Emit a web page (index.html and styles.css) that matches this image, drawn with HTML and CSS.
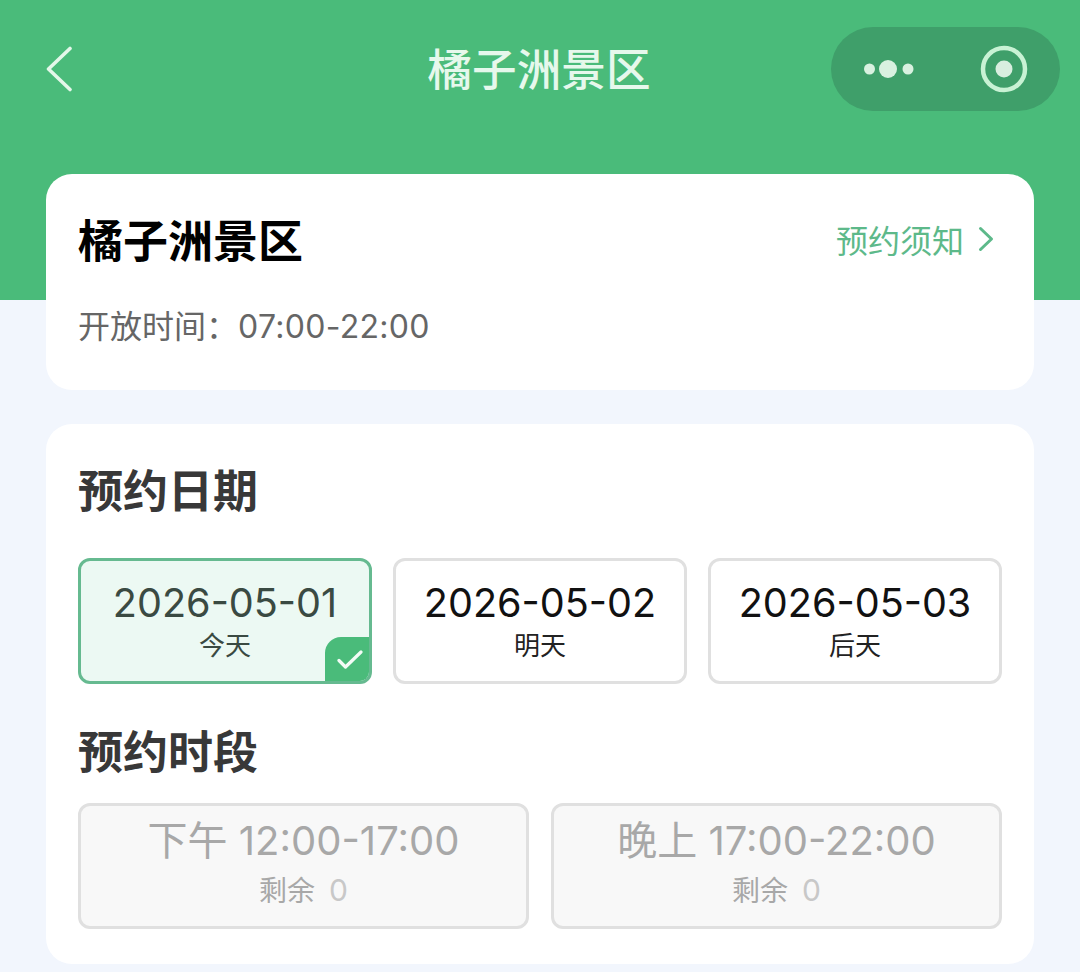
FILE: index.html
```html
<!DOCTYPE html>
<html lang="zh-CN">
<head>
  <meta charset="UTF-8" />
  <meta name="viewport" content="width=device-width, initial-scale=1" />
  <title>橘子洲景区 - 预约</title>
  <link rel="stylesheet" href="styles.css">
</head>
<body>
  <header class="navbar">
    <div class="nav-left">
      <svg class="back" width="28" height="46" viewBox="0 0 28 46" fill="none">
        <path d="M24 2.5 L2.5 23 L24 43.5" stroke="#e3f7e9" stroke-width="3.6" stroke-linecap="round" stroke-linejoin="round"/>
      </svg>
    </div>
    <div class="nav-title">橘子洲景区</div>
    <div class="nav-right">
      <div class="capsule">
        <svg width="52" height="22" viewBox="0 0 52 22">
          <circle cx="5.5" cy="11" r="5.5" fill="#d9f1e0"/>
          <circle cx="24" cy="11" r="9" fill="#d9f1e0"/>
          <circle cx="44" cy="11" r="5.5" fill="#d9f1e0"/>
        </svg>
        <svg width="48" height="48" viewBox="0 0 48 48">
          <circle cx="24" cy="24" r="21" fill="none" stroke="#c8f2d4" stroke-width="4.5"/>
          <circle cx="24" cy="24" r="8.5" fill="#d9eedf"/>
        </svg>
      </div>
    </div>
  </header>

  <main class="content">
    <section class="card info-card">
      <div class="info-head">
        <h1>橘子洲景区</h1>
        <a class="notice">预约须知
          <svg width="16" height="26" viewBox="0 0 16 26" fill="none">
            <path d="M2.5 2.5 L13.5 13 L2.5 23.5" stroke="#5db98a" stroke-width="3" stroke-linecap="round" stroke-linejoin="round"/>
          </svg>
        </a>
      </div>
      <p class="open-time">开放时间：<span class="hours">07:00-22:00</span></p>
    </section>

    <section class="card booking-card">
      <h2>预约日期</h2>
      <div class="dates">
        <div class="chip selected">
          <div class="chip-main">2026-05-01</div>
          <div class="chip-sub">今天</div>
          <span class="tick">
            <svg width="26" height="19" viewBox="0 0 26 19" fill="none">
              <path d="M2 10.5 L8.5 17 L24 2" stroke="#f3fbf6" stroke-width="3.2" stroke-linecap="round" stroke-linejoin="round"/>
            </svg>
          </span>
        </div>
        <div class="chip">
          <div class="chip-main">2026-05-02</div>
          <div class="chip-sub">明天</div>
        </div>
        <div class="chip">
          <div class="chip-main">2026-05-03</div>
          <div class="chip-sub">后天</div>
        </div>
      </div>

      <h2 class="slot-title">预约时段</h2>
      <div class="slots">
        <div class="chip disabled">
          <div class="chip-main">下午 12:00-17:00</div>
          <div class="chip-sub">剩余 <span class="left">0</span></div>
        </div>
        <div class="chip disabled">
          <div class="chip-main">晚上 17:00-22:00</div>
          <div class="chip-sub">剩余 <span class="left">0</span></div>
        </div>
      </div>
    </section>
  </main>
</body>
</html>
```

FILE: styles.css
```css
html, body {
  margin: 0;
  padding: 0;
}
body {
  min-height: 972px;
  overflow: hidden;
  background: linear-gradient(180deg, #4abb7a 0, #4abb7a 300px, #f2f6fd 300px);
  font-family: Inter, "Noto Sans CJK SC", sans-serif;
  color: #000;
}
.navbar {
  height: 174px;
  box-sizing: border-box;
  padding: 0 20px 34px;
  display: grid;
  grid-template-columns: 1fr auto 1fr;
  align-items: center;
}
.nav-left {
  padding-left: 26px;
}
.back {
  display: block;
  margin-top: -2px;
}
.nav-title {
  font-size: 44.6px;
  font-weight: 500;
  color: #e6f8ec;
  margin: -8px 2px 0 0;
}
.nav-right {
  display: flex;
  justify-content: flex-end;
}
.capsule {
  width: 229px;
  height: 84px;
  margin-top: -2px;
  box-sizing: border-box;
  padding: 0 32px 0 33px;
  border-radius: 42px;
  background: #3f9f6a;
  display: flex;
  align-items: center;
  justify-content: space-between;
}
.content {
  padding: 0 46px;
  display: flex;
  flex-direction: column;
  gap: 34px;
}
.card {
  background: #fff;
  border-radius: 26px;
  padding: 0 32px;
}
.info-card {
  height: 216px;
  box-sizing: border-box;
  padding-top: 40px;
}
.info-head {
  display: flex;
  justify-content: space-between;
  align-items: center;
}
h1 {
  margin: 0;
  font-size: 45px;
  line-height: 56px;
  font-weight: 700;
}
.notice {
  display: flex;
  align-items: center;
  gap: 14px;
  margin-top: -7px;
  padding-right: 8px;
  font-size: 32px;
  color: #5db98a;
}
.open-time {
  margin: 37px 0 0;
  font-size: 32px;
  line-height: 40px;
  color: #666;
}
.hours {
  letter-spacing: 0.3px;
}
.booking-card {
  height: 540px;
  box-sizing: border-box;
  padding-top: 38px;
}
h2 {
  margin: 0;
  font-size: 45px;
  line-height: 60px;
  font-weight: 700;
  color: #383838;
}
.dates {
  display: grid;
  grid-template-columns: repeat(3, 1fr);
  gap: 21px;
  margin-top: 36px;
}
.slots {
  display: grid;
  grid-template-columns: repeat(2, 1fr);
  gap: 22px;
  margin-top: 20px;
}
.slot-title {
  margin-top: 39px;
}
.chip {
  position: relative;
  height: 126px;
  box-sizing: border-box;
  border: 3px solid #e0e0e0;
  border-radius: 12px;
  background: #fff;
  text-align: center;
  overflow: hidden;
  padding-top: 18px;
}
.chip-main {
  font-size: 39.6px;
  line-height: 48px;
  color: #111;
}
.chip-sub {
  font-size: 26px;
  line-height: 37px;
  color: #222;
}
.selected {
  border-color: #66ba90;
  background: #ecf9f3;
}
.selected .chip-main,
.selected .chip-sub {
  color: #3a4a42;
}
.tick {
  position: absolute;
  right: -1px;
  bottom: -1px;
  width: 45px;
  height: 45px;
  box-sizing: border-box;
  padding-left: 5px;
  border-radius: 16px 0 0 0;
  background: #4abb7a;
  display: flex;
  align-items: center;
  justify-content: center;
}
.disabled {
  padding-top: 11px;
  background: #f8f8f8;
}
.disabled .chip-main {
  font-size: 40px;
  color: #a8a8a8;
}
.disabled .chip-sub {
  font-size: 28px;
  color: #a8a8a8;
  margin-top: 7px;
}
.left {
  font-size: 30px;
  color: #c8c8c8;
  margin-left: 6px;
}
```
